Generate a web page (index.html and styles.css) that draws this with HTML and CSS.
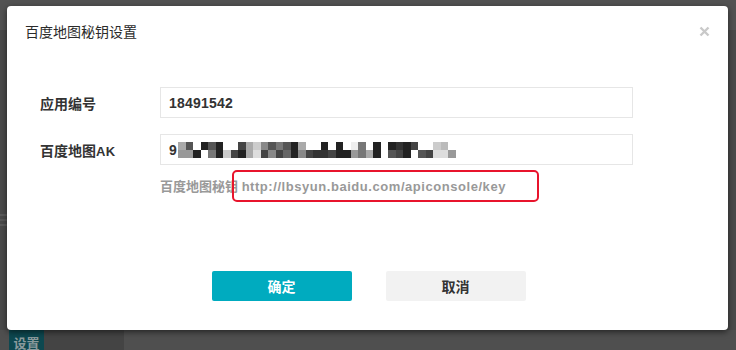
FILE: index.html
```html
<!DOCTYPE html>
<html lang="zh">
<head>
<meta charset="utf-8">
<title>百度地图秘钥设置</title>
<link rel="stylesheet" href="styles.css">
</head>
<body>
<div class="backdrop">
  <div class="bd-top"></div>
  <div class="bd-side-mark"></div>
  <div class="bd-bottom">
    <span class="bd-btn">设置</span>
    <span class="bd-panel"></span>
  </div>
</div>

<div class="modal">
  <div class="modal-header">
    <span class="modal-title">百度地图秘钥设置</span>
    <span class="close" aria-label="关闭">
      <svg width="11" height="11" viewBox="0 0 11 11"><path d="M1.5 1.5 L9.5 9.5 M9.5 1.5 L1.5 9.5" stroke="#c9c9c9" stroke-width="2.4" stroke-linecap="butt" fill="none"/></svg>
    </span>
  </div>
  <div class="modal-body">
    <div class="row">
      <label class="label">应用编号</label>
      <div class="field">18491542</div>
    </div>
    <div class="row">
      <label class="label">百度地图<span class="latin">AK</span></label>
      <div class="field"><span>9</span><span class="pix">
<i class="ka"></i><i class="k5"></i><i class="kf"></i><i class="k2"></i><i class="k5"></i><i class="k2"></i><i class="kf"></i><i class="kf"></i><i class="k4"></i><i class="ka"></i><i class="kc"></i><i class="k8"></i><i class="k5"></i><i class="k7"></i><i class="k5"></i><i class="k2"></i><i class="ka"></i><i class="kf"></i><i class="kf"></i><i class="k2"></i><i class="kf"></i><i class="k2"></i><i class="kf"></i><i class="ke"></i><i class="k7"></i><i class="kf"></i><i class="k2"></i><i class="kf"></i><i class="k2"></i><i class="k3"></i><i class="k2"></i><i class="k4"></i><i class="kf"></i><i class="kf"></i><i class="kc"></i><i class="kb"></i><i class="kf"></i>
<i class="k9"></i><i class="k9"></i><i class="k2"></i><i class="kf"></i><i class="k7"></i><i class="k2"></i><i class="kc"></i><i class="k4"></i><i class="k2"></i><i class="ka"></i><i class="kd"></i><i class="k4"></i><i class="k8"></i><i class="k4"></i><i class="k6"></i><i class="k2"></i><i class="k8"></i><i class="k4"></i><i class="k3"></i><i class="k3"></i><i class="k4"></i><i class="k2"></i><i class="k2"></i><i class="k9"></i><i class="k7"></i><i class="ka"></i><i class="k2"></i><i class="kf"></i><i class="k5"></i><i class="k4"></i><i class="k2"></i><i class="kf"></i><i class="k5"></i><i class="k4"></i><i class="kd"></i><i class="kd"></i><i class="k9"></i>
      </span></div>
    </div>
    <div class="hint">百度地图秘钥 <span class="url">http://lbsyun.baidu.com/apiconsole/key</span></div>
  </div>
  <div class="modal-footer">
    <button class="btn btn-primary">确定</button>
    <button class="btn btn-default">取消</button>
  </div>
  <div class="annotation"></div>
</div>
</body>
</html>
```
FILE: styles.css
```css
* { box-sizing: border-box; }
html, body { margin: 0; padding: 0; }
body {
  width: 736px;
  height: 350px;
  overflow: hidden;
  background: #4a4a4a;
  font-family: "Liberation Sans", "Noto Sans CJK SC", sans-serif;
  padding: 6px 0 0 7px;
  position: relative;
}

/* app behind the overlay */
.backdrop { position: absolute; inset: 0; z-index: 0; }
.bd-top { position: absolute; left: 0; top: 0; right: 0; height: 30px; background: #525252; }
.bd-side-mark {
  position: absolute; left: 0; top: 214px; width: 7px; height: 12px;
  border-top: 2px solid #5a5a5a; border-bottom: 2px solid #5a5a5a;
  background: linear-gradient(#4a4a4a 0 3px, #585858 3px 5px, #4a4a4a 5px);
}
.bd-bottom { position: absolute; left: 0; right: 0; bottom: 0; height: 20px; display: flex; padding-left: 9px; background: #4f4f4f; }
.bd-btn {
  width: 35px; height: 20px; background: #0d4850; color: #8a9a9c;
  font-size: 13px; font-weight: bold; line-height: 14px; text-align: center;
  padding-top: 6px;
  font-family: "Noto Sans CJK SC", sans-serif;
}
.bd-panel { width: 80px; background: #444; }

/* modal */
.modal {
  position: relative;
  z-index: 1;
  width: 721px;
  height: 324px;
  background: #fff;
  border-radius: 4px;
  box-shadow: 0 2px 6px rgba(0,0,0,0.55);
  display: flex;
  flex-direction: column;
}
.modal-header {
  padding: 15px 18px 0 18px;
  height: 35px;
  display: flex;
  align-items: center;
  justify-content: space-between;
}
.modal-title {
  font-family: "Noto Sans CJK SC", sans-serif;
  font-size: 14px;
  line-height: 20px;
  color: #2b2b2b;
}
.close { width: 11px; height: 11px; display: block; margin-top: 1px; }
.close svg { display: block; }

.modal-body { padding: 46px 95px 0 33px; }
.row { display: flex; align-items: center; margin-bottom: 16px; }
.label {
  width: 120px;
  font-size: 14px;
  font-weight: bold;
  color: #333;
}
.latin { font-size: 13px; letter-spacing: 0.3px; }
.field {
  width: 473px;
  height: 31px;
  border: 1px solid #e6e6e6;
  padding-left: 8px;
  display: flex;
  align-items: center;
  font-size: 14px;
  font-weight: bold;
  color: #333;
  letter-spacing: 0.2px;
}
.pix {
  display: grid;
  grid-template-columns: repeat(37, 7.5px);
  grid-template-rows: 8px 8px;
  margin-left: 1px;
  margin-top: 1px;
}
.pix i { display: block; }
.k2 { background: #222; } .k3 { background: #333; } .k4 { background: #444; }
.k5 { background: #555; } .k6 { background: #666; } .k7 { background: #777; }
.k8 { background: #888; } .k9 { background: #999; } .ka { background: #aaa; }
.kb { background: #bbb; } .kc { background: #ccc; } .kd { background: #ddd; }
.ke { background: #eee; } .kf { background: #fff; }

.hint {
  margin: -4px 0 0 120px;
  font-size: 13px;
  line-height: 20px;
  font-weight: bold;
  color: #999;
}
.url { letter-spacing: 0.55px; }

.modal-footer {
  margin-top: auto;
  padding: 0 0 29px 2px;
  display: flex;
  justify-content: center;
  gap: 34px;
}
.btn {
  width: 140px;
  height: 30px;
  border: none;
  border-radius: 2px;
  font-family: "Noto Sans CJK SC", sans-serif;
  font-size: 14px;
  font-weight: bold;
  padding: 0;
}
.btn-primary { background: #00abbf; color: #fff; }
.btn-default { background: #f2f2f2; color: #333; }

/* red highlight drawn over the screenshot */
.annotation {
  position: absolute;
  left: 225px;
  top: 164px;
  width: 307px;
  height: 32px;
  border: 2px solid #e8142c;
  border-radius: 5px;
}
```
